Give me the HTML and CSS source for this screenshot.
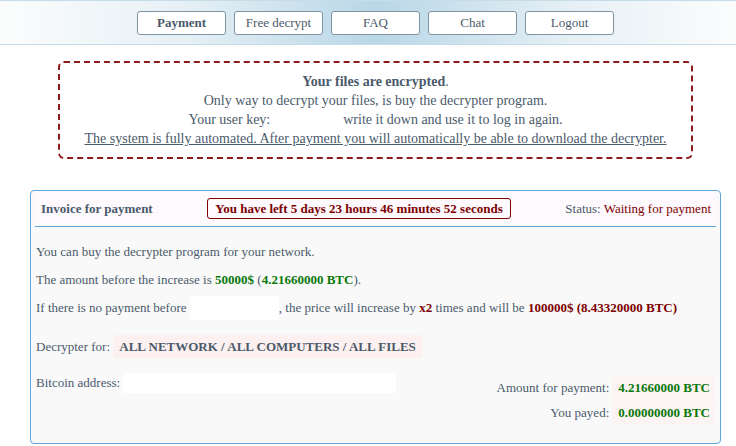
FILE: index.html
```html
<!DOCTYPE html>
<html>
<head>
<meta charset="utf-8">
<link rel="stylesheet" href="styles.css">
</head>
<body>
<header class="topbar">
  <nav class="nav">
    <a class="btn btn-active">Payment</a>
    <a class="btn">Free decrypt</a>
    <a class="btn">FAQ</a>
    <a class="btn">Chat</a>
    <a class="btn">Logout</a>
  </nav>
</header>
<main class="main">
  <section class="notice">
    <div class="line"><b>Your files are encrypted</b>.</div>
    <div class="line">Only way to decrypt your files, is buy the decrypter program.</div>
    <div class="line">Your user key: <span class="key"></span> write it down and use it to log in again.</div>
    <div class="line"><u>The system is fully automated. After payment you will automatically be able to download the decrypter.</u></div>
  </section>
  <section class="invoice">
    <div class="inv-head">
      <span class="inv-title">Invoice for payment</span>
      <span class="timer">You have left 5 days 23 hours 46 minutes 52 seconds</span>
      <span class="status">Status: <span class="red">Waiting for payment</span></span>
    </div>
    <div class="inv-body">
      <div class="row">You can buy the decrypter program for your network.</div>
      <div class="row">The amount before the increase is&nbsp;<b class="green">50000$</b>&nbsp;(<b class="green">4.21660000 BTC</b>).</div>
      <div class="row">If there is no payment before&nbsp;<span class="blank blank-date"></span>, the price will increase by&nbsp;<b class="red">x2</b>&nbsp;times and will be&nbsp;<b class="red">100000$ (8.43320000 BTC)</b></div>
      <div class="row row-decr">Decrypter for:&nbsp;<span class="tag">ALL NETWORK / ALL COMPUTERS / ALL FILES</span></div>
      <div class="bottom">
        <div class="addr">Bitcoin address:&nbsp;<span class="blank blank-addr"></span></div>
        <div class="amounts">
          <div class="amt-row"><span class="amt-label">Amount for payment:</span><span class="amt-val">4.21660000 BTC</span></div>
          <div class="amt-row"><span class="amt-label">You payed:</span><span class="amt-val">0.00000000 BTC</span></div>
        </div>
      </div>
    </div>
  </section>
</main>
</body>
</html>
```

FILE: styles.css
```css
html, body {
  margin: 0;
  padding: 0;
  background: #ffffff;
}
body {
  font-family: "Liberation Serif", "Times New Roman", serif;
  color: #4b5a6b;
  width: 736px;
  height: 446px;
  overflow: hidden;
}
.topbar {
  height: 43px;
  border-top: 1px solid #c6dce8;
  border-bottom: 1px solid #c6dce8;
  background: linear-gradient(to right, #fbfdfd 0%, #e6f0f5 25%, #b9d7e7 51%, #e6f0f5 78%, #fbfdfd 100%);
}
.nav {
  display: flex;
  justify-content: center;
  gap: 8px;
  padding: 10px 0 0 15px;
}
.btn {
  box-sizing: border-box;
  width: 89px;
  height: 24px;
  border: 1px solid #7e94a3;
  border-radius: 3px;
  background: #ffffff;
  color: #4b5a6b;
  font-size: 13px;
  line-height: 22px;
  text-align: center;
}
.btn-active {
  font-weight: bold;
}
.main {
  padding: 16px 15px 0 30px;
}
.notice {
  box-sizing: border-box;
  margin: 0 28px;
  height: 98px;
  border: 2px dashed #8b1a1a;
  border-radius: 6px;
  padding: 9px 0 0;
  text-align: center;
  font-size: 14px;
  line-height: 19px;
}
.key {
  display: inline-block;
  width: 66px;
}
.invoice {
  box-sizing: border-box;
  margin-top: 31px;
  height: 254px;
  border: 1px solid #5ea6da;
  border-radius: 4px;
  background: #f9f9f9;
  padding: 0 4px;
  font-size: 13px;
}
.inv-head {
  display: flex;
  align-items: center;
  justify-content: space-between;
  height: 35px;
  border-bottom: 1px solid #5ea6da;
  background: #fdf9fd;
  padding: 0 5px 0 6px;
}
.inv-title {
  font-weight: bold;
}
.timer {
  border: 1px solid #7d0000;
  border-radius: 3px;
  color: #7d0000;
  font-weight: bold;
  padding: 0 7px;
  line-height: 19px;
}
.red {
  color: #7d0000;
}
.green {
  color: #0b780b;
}
.inv-body {
  padding: 13px 1px 0;
}
.row {
  display: flex;
  align-items: center;
  height: 24px;
  margin-bottom: 4px;
  white-space: nowrap;
}
.blank {
  display: inline-block;
  background: #ffffff;
}
.blank-date {
  width: 89px;
  height: 24px;
}
.row-decr {
  margin-top: 15px;
  height: 23px;
}
.tag {
  background: #fcf0f0;
  font-weight: bold;
  padding: 0 6px;
  line-height: 23px;
}
.bottom {
  display: flex;
  justify-content: space-between;
  margin-top: 15px;
}
.addr {
  display: flex;
  align-items: center;
  height: 20px;
}
.blank-addr {
  width: 273px;
  height: 20px;
}
.amounts {
  display: flex;
  flex-direction: column;
  align-items: flex-end;
  gap: 1px;
  padding-top: 3px;
}
.amt-row {
  display: flex;
  align-items: center;
  height: 24px;
}
.amt-val {
  background: #fcf3f3;
  color: #0b780b;
  font-weight: bold;
  line-height: 24px;
  padding: 0 5px 0 6px;
  margin-left: 3px;
}
```
